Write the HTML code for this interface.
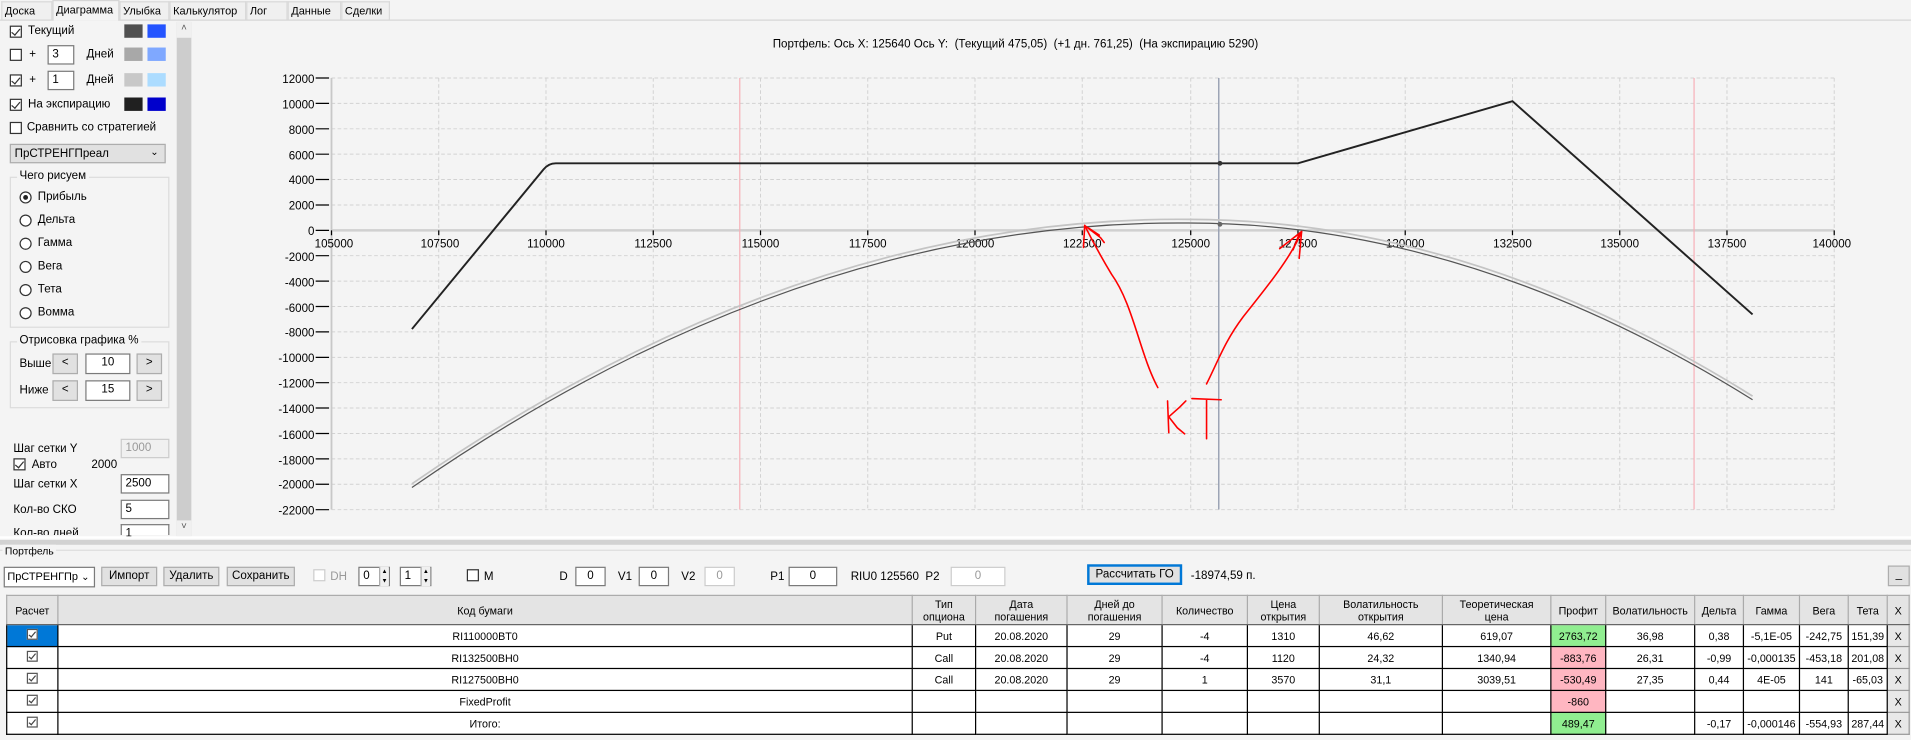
<!DOCTYPE html>
<html><head><meta charset="utf-8"><style>
*{box-sizing:border-box;margin:0;padding:0}
html,body{width:1911px;height:739px;overflow:hidden;background:#f4f4f4}
#w{position:absolute;left:0;top:0;width:1568px;height:607px;transform:scale(1.21875);transform-origin:0 0;font-family:"Liberation Sans",Arial,sans-serif;font-size:9.5px;color:#000;background:#f4f4f4}
.a{position:absolute;white-space:nowrap}
.tab{position:absolute;top:1px;height:15px;border:1px solid #d9d9d9;border-bottom:none;background:#f0f0f0;font-size:9px;padding:2px 2px 0;overflow:hidden}
.cb{position:absolute;width:10px;height:10px;border:1px solid #333;background:#fff}
.cb.on::after{content:"";position:absolute;left:2px;top:0px;width:3px;height:6px;border:solid #333;border-width:0 1px 1px 0;transform:rotate(40deg)}
.rb{position:absolute;width:10px;height:10px;border:1px solid #333;border-radius:50%;background:#fff}
.sw{position:absolute;width:15px;height:11px}
.tb{position:absolute;height:15px;border:1px solid #7a7a7a;background:#fff;padding:1px 3px;font-size:9.5px}
.btn{position:absolute;height:15px;border:1px solid #adadad;background:#e1e1e1;font-size:9.5px;text-align:center;line-height:13px}
.grp{position:absolute;border:1px solid #dcdcdc}
.grp span{position:absolute;top:-7px;left:5px;background:#f4f4f4;padding:0 2px}
.sp{position:absolute;width:8px;height:16px;border-left:1px solid #aaa;font-size:5px;line-height:8px;text-align:center;background:#f0f0f0}
table{position:absolute;left:5px;top:488px;border-collapse:collapse;font-size:8.8px;background:#fff}
td{border:1px solid #000;text-align:center;height:18px;padding:0;line-height:10px}
tr.h td{background:#e4e4e4;height:24px;border-color:#aaa #aaa #666 #aaa}
td.x{background:#e8e8e8;border:1px solid #999}
td.g{background:#90ee90}td.p{background:#ffb6c1}
.c{display:inline-block;width:9px;height:9px;border:1px solid #555;position:relative;background:#fff}
.c::after{content:"";position:absolute;left:2px;top:0;width:2px;height:5px;border:solid #444;border-width:0 1px 1px 0;transform:rotate(40deg)}
</style></head><body><div id="w">
<div class="a" style="left:0;top:16px;width:1568px;height:1px;background:#d6d6d6"></div>
<div class="tab" style="left:1px;width:42px">Доска</div>
<div class="tab" style="left:43px;width:55px;top:0;height:17px;background:#f4f4f4;border-color:#d6d6d6">Диаграмма</div>
<div class="tab" style="left:98px;width:41px">Улыбка</div>
<div class="tab" style="left:139px;width:63px">Калькулятор</div>
<div class="tab" style="left:202px;width:34px">Лог</div>
<div class="tab" style="left:236px;width:44px">Данные</div>
<div class="tab" style="left:280px;width:40px">Сделки</div>

<div class="cb on" style="left:8px;top:21px"></div><div class="a" style="left:23px;top:20px">Текущий</div>
<div class="sw" style="left:102px;top:20px;background:#505050"></div><div class="sw" style="left:121px;top:20px;background:#2454ff"></div>
<div class="cb" style="left:8px;top:40px"></div><div class="a" style="left:24px;top:39px">+</div>
<div class="tb" style="left:39px;top:37px;width:22px;height:16px">3</div><div class="a" style="left:71px;top:39px">Дней</div>
<div class="sw" style="left:102px;top:39px;background:#a8a8a8"></div><div class="sw" style="left:121px;top:39px;background:#7fa8ff"></div>
<div class="cb on" style="left:8px;top:61px"></div><div class="a" style="left:24px;top:60px">+</div>
<div class="tb" style="left:39px;top:58px;width:22px;height:16px">1</div><div class="a" style="left:71px;top:60px">Дней</div>
<div class="sw" style="left:102px;top:60px;background:#c8c8c8"></div><div class="sw" style="left:121px;top:60px;background:#acdcff"></div>
<div class="cb on" style="left:8px;top:81px"></div><div class="a" style="left:23px;top:80px">На экспирацию</div>
<div class="sw" style="left:102px;top:80px;background:#202020"></div><div class="sw" style="left:121px;top:80px;background:#0000cc"></div>
<div class="cb" style="left:8px;top:100px"></div><div class="a" style="left:22px;top:99px">Сравнить со стратегией</div>
<div class="a" style="left:8px;top:118px;width:128px;height:16px;border:1px solid #adadad;background:#e1e1e1;padding:2px 3px">ПрСТРЕНГПреал<span style="position:absolute;right:5px;top:1px;font-size:8px">&#8964;</span></div>
<div class="grp" style="left:8px;top:145px;width:131px;height:124px"><span>Чего рисуем</span></div>
<div class="rb" style="left:16px;top:157px"><div style="position:absolute;left:2px;top:2px;width:4px;height:4px;border-radius:50%;background:#222"></div></div><div class="a" style="left:31px;top:156px">Прибыль</div>
<div class="rb" style="left:16px;top:176px"></div><div class="a" style="left:31px;top:175px">Дельта</div>
<div class="rb" style="left:16px;top:195px"></div><div class="a" style="left:31px;top:194px">Гамма</div>
<div class="rb" style="left:16px;top:214px"></div><div class="a" style="left:31px;top:213px">Вега</div>
<div class="rb" style="left:16px;top:233px"></div><div class="a" style="left:31px;top:232px">Тета</div>
<div class="rb" style="left:16px;top:252px"></div><div class="a" style="left:31px;top:251px">Вомма</div>
<div class="grp" style="left:8px;top:280px;width:131px;height:55px"><span>Отрисовка графика %</span></div>
<div class="a" style="left:16px;top:293px">Выше</div>
<div class="btn" style="left:43px;top:290px;width:21px;height:17px">&lt;</div>
<div class="tb" style="left:70px;top:290px;width:37px;height:17px;text-align:center">10</div>
<div class="btn" style="left:112px;top:290px;width:21px;height:17px">&gt;</div>
<div class="a" style="left:16px;top:315px">Ниже</div>
<div class="btn" style="left:43px;top:312px;width:21px;height:17px">&lt;</div>
<div class="tb" style="left:70px;top:312px;width:37px;height:17px;text-align:center">15</div>
<div class="btn" style="left:112px;top:312px;width:21px;height:17px">&gt;</div>
<div class="a" style="left:11px;top:363px">Шаг сетки Y</div>
<div class="tb" style="left:99px;top:360px;width:40px;height:16px;color:#999;border-color:#ccc;background:#f0f0f0">1000</div>
<div class="cb on" style="left:11px;top:376px"></div><div class="a" style="left:26px;top:376px">Авто</div><div class="a" style="left:75px;top:376px">2000</div>
<div class="a" style="left:11px;top:392px">Шаг сетки X</div>
<div class="tb" style="left:99px;top:389px;width:40px;height:16px">2500</div>
<div class="a" style="left:11px;top:413px">Кол-во СКО</div>
<div class="tb" style="left:99px;top:410px;width:40px;height:16px">5</div>
<div class="a" style="left:11px;top:432px;height:7px;overflow:hidden">Кол-во дней</div>
<div class="tb" style="left:99px;top:430px;width:40px;height:9px;border-bottom:none">1</div>
<div class="a" style="left:145px;top:18px;width:12px;height:422px;background:#cdcdcd"></div>
<div class="a" style="left:145px;top:18px;width:12px;height:13px;background:#f0f0f0;font-size:8px;text-align:center;color:#555">&#708;</div>
<div class="a" style="left:145px;top:427px;width:12px;height:13px;background:#f0f0f0;font-size:8px;text-align:center;color:#555">&#709;</div>

<div class="a" style="left:634px;top:31px;font-size:9.5px">Портфель: Ось X: 125640 Ось Y:&nbsp; (Текущий 475,05)&nbsp; (+1 дн. 761,25)&nbsp; (На экспирацию 5290)</div>
<svg class="a" style="left:0;top:0" width="1568" height="607" viewBox="0 0 1568 607" font-family="Liberation Sans, Arial, sans-serif" font-size="9.5">
<g stroke="#d2d2d2" stroke-dasharray="3,2" stroke-width="0.8">
<path d="M360 64V418M448 64V418M536 64V418M624 64V418M712 64V418M800 64V418M888 64V418M977 64V418M1065 64V418M1153 64V418M1241 64V418M1329 64V418M1417 64V418M1505 64V418"/>
<path d="M272 64H1505M272 84.8H1505M272 105.7H1505M272 126.5H1505M272 147.3H1505M272 168.2H1505M272 209.8H1505M272 230.7H1505M272 251.5H1505M272 272.3H1505M272 293.2H1505M272 314H1505M272 334.8H1505M272 355.7H1505M272 376.5H1505M272 397.3H1505M272 418.2H1505"/>
</g>
<path d="M272 64V418" stroke="#c8c8c8" stroke-width="1.5"/>
<path d="M272 189H1505" stroke="#d0d0d0" stroke-width="2"/>
<g stroke="#000" stroke-width="1"><path d="M259 64H270M259 84.8H270M259 105.7H270M259 126.5H270M259 147.3H270M259 168.2H270M259 189H270M259 209.8H270M259 230.7H270M259 251.5H270M259 272.3H270M259 293.2H270M259 314H270M259 334.8H270M259 355.7H270M259 376.5H270M259 397.3H270M259 418.2H270"/>
<path d="M272 189v4M360 189v4M448 189v4M536 189v4M624 189v4M712 189v4M800 189v4M888 189v4M977 189v4M1065 189v4M1153 189v4M1241 189v4M1329 189v4M1417 189v4M1505 189v4"/></g>
<g text-anchor="end"><text x="258" y="68">12000</text><text x="258" y="89">10000</text><text x="258" y="110">8000</text><text x="258" y="131">6000</text><text x="258" y="151">4000</text><text x="258" y="172">2000</text><text x="258" y="193">0</text><text x="258" y="214">-2000</text><text x="258" y="235">-4000</text><text x="258" y="256">-6000</text><text x="258" y="276">-8000</text><text x="258" y="297">-10000</text><text x="258" y="318">-12000</text><text x="258" y="339">-14000</text><text x="258" y="360">-16000</text><text x="258" y="381">-18000</text><text x="258" y="401">-20000</text><text x="258" y="422">-22000</text></g>
<g text-anchor="middle"><text x="274" y="203">105000</text><text x="361" y="203">107500</text><text x="448" y="203">110000</text><text x="536" y="203">112500</text><text x="624" y="203">115000</text><text x="712" y="203">117500</text><text x="800" y="203">120000</text><text x="888" y="203">122500</text><text x="977" y="203">125000</text><text x="1065" y="203">127500</text><text x="1153" y="203">130000</text><text x="1241" y="203">132500</text><text x="1329" y="203">135000</text><text x="1417" y="203">137500</text><text x="1503" y="203">140000</text></g>
<path d="M607 64V418M1390 64V418" stroke="#f6b0b8" stroke-width="1"/>
<path d="M1000 64V418" stroke="#9aa2b4" stroke-width="1.2"/>
<path d="M338 397 Q656 177 975 180 Q1206 180 1438 325" fill="none" stroke="#c4c4c4" stroke-width="1.4"/>
<path d="M338 400 Q656 180 975 183 Q1206 183 1438 328" fill="none" stroke="#555" stroke-width="1"/>
<path d="M338 270 L446 139 Q450 134 456 134 L1065 134 L1241 83 L1438 258" fill="none" stroke="#222" stroke-width="1.6"/>
<circle cx="1001" cy="134" r="2" fill="#333"/><circle cx="1001" cy="184" r="2" fill="#666"/>
<g stroke="#ff0000" stroke-width="1.3" fill="none" stroke-linecap="round">
<path d="M950 318 C935 290 930 250 912 225 C900 205 895 195 890 185"/>
<path d="M890 185 L889 203M890 185 L903 195 L906 199M893 187 L902 193"/>
<path d="M990 315 C1000 295 1005 280 1020 260 C1040 235 1060 210 1068 190"/>
<path d="M1068 190 L1050 204M1068 190 L1066 212M1066 192 L1061 205"/>
<path d="M958 329 L959 355M973 329 L968 334 L959 342 L966 351 L972 356"/>
<path d="M978 327 L1002 328M990 328 L990 360"/>
</g>
</svg>

<div class="a" style="left:0;top:440px;width:1568px;height:2px;background:#fff"></div>
<div class="a" style="left:0;top:443px;width:1568px;height:4px;background:#d2d2d2"></div>
<div class="a" style="left:0;top:451px;width:1568px;height:1px;background:#ddd"></div>
<div class="a" style="left:2px;top:447px;background:#f4f4f4;padding:0 2px;font-size:8.5px">Портфель</div>

<div class="a" style="left:3px;top:465px;width:75px;height:17px;border:1px solid #7a7a7a;background:#fff;padding:2px 2px;font-size:9px">ПрСТРЕНГПр <span style="font-size:8px">&#8964;</span></div>
<div class="btn" style="left:83px;top:465px;width:46px;height:16px">Импорт</div>
<div class="btn" style="left:134px;top:465px;width:46px;height:16px">Удалить</div>
<div class="btn" style="left:186px;top:465px;width:56px;height:16px">Сохранить</div>
<div class="cb" style="left:257px;top:467px;border-color:#ccc"></div><div class="a" style="left:271px;top:468px;color:#999">DH</div>
<div class="tb" style="left:294px;top:465px;width:26px;height:16px">0<div class="sp" style="right:0;top:-1px">&#9650;<br>&#9660;</div></div>
<div class="tb" style="left:328px;top:465px;width:26px;height:16px">1<div class="sp" style="right:0;top:-1px">&#9650;<br>&#9660;</div></div>
<div class="cb" style="left:383px;top:467px"></div><div class="a" style="left:397px;top:468px">M</div>
<div class="a" style="left:459px;top:468px">D</div><div class="tb" style="left:472px;top:465px;width:25px;height:16px;text-align:center">0</div>
<div class="a" style="left:507px;top:468px">V1</div><div class="tb" style="left:524px;top:465px;width:25px;height:16px;text-align:center">0</div>
<div class="a" style="left:559px;top:468px">V2</div><div class="tb" style="left:578px;top:465px;width:25px;height:16px;text-align:center;color:#999;border-color:#ccc">0</div>
<div class="a" style="left:632px;top:468px">P1</div><div class="tb" style="left:647px;top:465px;width:40px;height:16px;text-align:center">0</div>
<div class="a" style="left:698px;top:468px">RIU0 125560&nbsp; P2</div>
<div class="tb" style="left:780px;top:465px;width:45px;height:16px;text-align:center;color:#999;border-color:#ccc">0</div>
<div class="btn" style="left:892px;top:463px;width:78px;height:17px;border:2px solid #0078d7">Рассчитать ГО</div>
<div class="a" style="left:977px;top:467px">-18974,59 п.</div>
<div class="btn" style="left:1549px;top:464px;width:18px;height:17px">_</div>

<table>
<colgroup><col style="width:42px"><col style="width:701px"><col style="width:52px"><col style="width:75px"><col style="width:78px"><col style="width:70px"><col style="width:59px"><col style="width:101px"><col style="width:89px"><col style="width:45px"><col style="width:73px"><col style="width:40px"><col style="width:46px"><col style="width:40px"><col style="width:32px"><col style="width:18px"></colgroup>
<tr class="h"><td>Расчет</td><td>Код бумаги</td><td>Тип<br>опциона</td><td>Дата<br>погашения</td><td>Дней до<br>погашения</td><td>Количество</td><td>Цена<br>открытия</td><td>Волатильность<br>открытия</td><td>Теоретическая<br>цена</td><td>Профит</td><td>Волатильность</td><td>Дельта</td><td>Гамма</td><td>Вега</td><td>Тета</td><td class="x">X</td></tr>
<tr><td style="background:#0078d7"><span class="c"></span></td><td>RI110000BT0</td><td>Put</td><td>20.08.2020</td><td>29</td><td>-4</td><td>1310</td><td>46,62</td><td>619,07</td><td class="g">2763,72</td><td>36,98</td><td>0,38</td><td>-5,1E-05</td><td>-242,75</td><td>151,39</td><td class="x">X</td></tr>
<tr><td><span class="c"></span></td><td>RI132500BH0</td><td>Call</td><td>20.08.2020</td><td>29</td><td>-4</td><td>1120</td><td>24,32</td><td>1340,94</td><td class="p">-883,76</td><td>26,31</td><td>-0,99</td><td>-0,000135</td><td>-453,18</td><td>201,08</td><td class="x">X</td></tr>
<tr><td><span class="c"></span></td><td>RI127500BH0</td><td>Call</td><td>20.08.2020</td><td>29</td><td>1</td><td>3570</td><td>31,1</td><td>3039,51</td><td class="p">-530,49</td><td>27,35</td><td>0,44</td><td>4E-05</td><td>141</td><td>-65,03</td><td class="x">X</td></tr>
<tr><td><span class="c"></span></td><td>FixedProfit</td><td></td><td></td><td></td><td></td><td></td><td></td><td></td><td class="p">-860</td><td></td><td></td><td></td><td></td><td></td><td class="x">X</td></tr>
<tr><td><span class="c"></span></td><td>Итого:</td><td></td><td></td><td></td><td></td><td></td><td></td><td></td><td class="g">489,47</td><td></td><td>-0,17</td><td>-0,000146</td><td>-554,93</td><td>287,44</td><td class="x">X</td></tr>
</table>
</div></body></html>
